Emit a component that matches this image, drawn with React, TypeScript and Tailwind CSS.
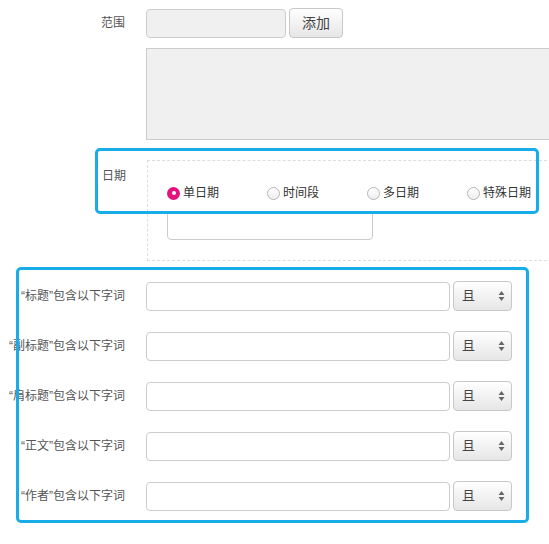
import React from 'react'

const font = { fontFamily: '"Liberation Sans", "Noto Sans CJK SC", sans-serif' }

const fields = ['“标题”包含以下字词', '“副标题”包含以下字词', '“肩标题”包含以下字词', '“正文”包含以下字词', '“作者”包含以下字词']

const dateTypes = ['单日期', '时间段', '多日期', '特殊日期']

const Radio = ({ checked }: { checked?: boolean }) =>
    checked ? (
        <span className="flex h-[13px] w-[13px] items-center justify-center rounded-full bg-[#e5127d]">
            <span className="h-[4px] w-[4px] rounded-full bg-white" />
        </span>
    ) : (
        <span className="h-[13px] w-[13px] rounded-full border border-[#b5b5b5] bg-gradient-to-b from-white to-[#eeeeee]" />
    )

const Select = () => (
    <div className="ml-[3px] flex h-[30px] w-[59px] shrink-0 items-center justify-between rounded-[4px] border border-[#c8c8c8] bg-gradient-to-b from-white to-[#e6e6e6] pl-[8px] pr-[6px] text-[13px] text-[#444]">
        <span>且</span>
        <svg width="7" height="12" viewBox="0 0 7 12">
            <path d="M3.5 1 L6.5 5 L0.5 5 Z" fill="#666" />
            <path d="M3.5 11 L6.5 7 L0.5 7 Z" fill="#666" />
        </svg>
    </div>
)

const App = () => {
    return (
        <div className="relative h-[544px] w-[549px] overflow-hidden bg-white text-[12px] text-[#555]" style={font}>
            {/* 范围 */}
            <section className="flex items-center pt-[8px]">
                <label className="w-[126px] shrink-0 pr-[1px] text-right">范围</label>
                <div className="ml-[20px] h-[29px] w-[140px] shrink-0 rounded-[4px] border border-[#cccccc] bg-[#f0f0f0]" />
                <button className="ml-[3px] h-[30px] w-[54px] shrink-0 rounded-[4px] border border-[#c8c8c8] bg-gradient-to-b from-white to-[#e6e6e6] text-[14px] text-[#444]">
                    添加
                </button>
            </section>
            <section className="ml-[146px] mt-[10px] h-[92px] w-[420px] border border-[#cccccc] bg-[#f0f0f0]" />

            {/* 日期 */}
            <section className="mt-[20px] flex items-start">
                <label className="w-[126px] shrink-0 pt-[7px] text-right">日期</label>
                <div className="ml-[21px] h-[101px] w-[420px] shrink-0 border border-dashed border-[#dddddd] pl-[19px] pt-[23px]">
                    <div className="flex text-[#333]">
                        {dateTypes.map((t, i) => (
                            <div key={t} className="flex w-[100px] shrink-0 items-center gap-[3px]">
                                <Radio checked={i === 0} />
                                <span>{t}</span>
                            </div>
                        ))}
                    </div>
                    <div className="mt-[9px] h-[29px] w-[206px] rounded-[4px] border border-[#cccccc] bg-white" />
                </div>
            </section>

            {/* 字词 */}
            <section className="mt-[20px] flex flex-col gap-[20px]">
                {fields.map((f) => (
                    <div key={f} className="flex items-center">
                        <label className="w-[126px] shrink-0 pr-[1px] text-right">{f}</label>
                        <div className="ml-[20px] h-[29px] w-[304px] shrink-0 rounded-[4px] border border-[#cccccc] bg-white" />
                        <Select />
                    </div>
                ))}
            </section>

            {/* highlight overlays */}
            <div className="absolute left-[95px] top-[148px] h-[66px] w-[444px] rounded-[5px] border-[3px] border-[#18ade8]" />
            <div className="absolute left-[16px] top-[267px] h-[256px] w-[513px] rounded-[5px] border-[3px] border-[#18ade8]" />
        </div>
    )
}

export default App
